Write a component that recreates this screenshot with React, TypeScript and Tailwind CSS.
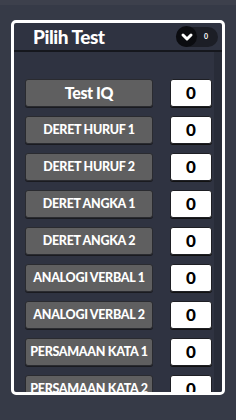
import { ChevronDown } from "lucide-react";

const tests = [
  "DERET HURUF 1",
  "DERET HURUF 2",
  "DERET ANGKA 1",
  "DERET ANGKA 2",
  "ANALOGI VERBAL 1",
  "ANALOGI VERBAL 2",
  "PERSAMAAN KATA 1",
  "PERSAMAAN KATA 2",
];

function Row({ label, big }: { label: string; big?: boolean }) {
  return (
    <div className="flex items-center h-[28px] shrink-0">
      <button
        className={`w-[128px] h-[28px] rounded-[3px] bg-[#5f5f60] border border-[#2a2b30] shadow-[0_1px_0_#1a1b20] text-white font-black flex items-center justify-center whitespace-nowrap ${
          big ? "text-[16px] tracking-tight" : "text-[12.5px] tracking-tight"
        }`}
      >
        {label}
      </button>
      <div className="ml-[17px] w-[42px] h-[28px] rounded-[3px] bg-white border border-[#1e1f24] shadow-[0_1px_0_#111] flex items-center justify-center text-black font-black text-[17px]">
        0
      </div>
    </div>
  );
}

export default function App() {
  return (
    <div
      className="w-[236px] h-[420px] bg-[#363a47] overflow-hidden flex flex-col"
      style={{ fontFamily: "Lato, 'Open Sans', sans-serif" }}
    >
      {/* top status band */}
      <div className="h-[5px] bg-[#3d404c] shrink-0" />

      {/* Panel */}
      <div className="ml-[11px] mt-[15px] w-[214px] h-[375px] border-[3px] border-white rounded-[5px] bg-[#2f3341] overflow-hidden flex flex-col">
        {/* Header */}
        <div className="h-[27px] flex items-center shrink-0">
          <h1 className="ml-[19px] text-white font-black text-[19px] tracking-tight leading-none">Pilih Test</h1>
          <div className="ml-auto mr-[4px] flex items-center h-[20px] w-[42px] rounded-full bg-[#1c1e26]">
            <div className="w-[21px] h-[21px] rounded-full bg-[#0b0c10] flex items-center justify-center">
              <ChevronDown size={16} strokeWidth={4.5} className="text-white" />
            </div>
            <span className="ml-[7px] text-white text-[7px] font-bold">0</span>
          </div>
        </div>
        <div className="h-[2px] bg-[#15171d] shrink-0" />

        {/* Content */}
        <div className="flex flex-1 min-h-0">
          <div className="flex-1 flex flex-col gap-[9px] pt-[27px] pl-[11px] overflow-hidden">
            <Row label="Test IQ" big />
            {tests.map((t) => (
              <Row key={t} label={t} />
            ))}
          </div>
          <div className="w-[8px] bg-[#282c38]" />
        </div>
      </div>
    </div>
  );
}
